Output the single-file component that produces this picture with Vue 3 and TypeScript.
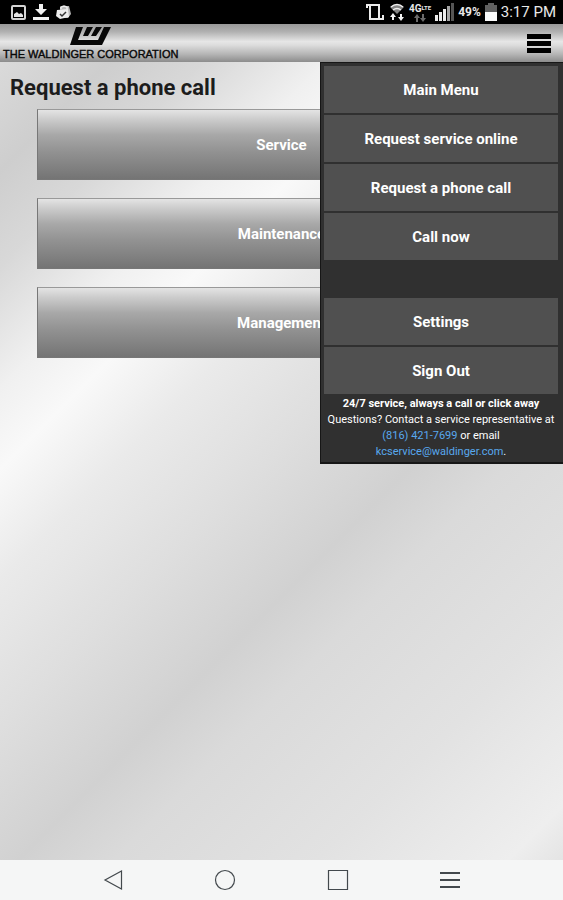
<script setup lang="ts">
import { ref } from 'vue'

const menuOpen = ref<boolean>(true)
const requests: string[] = ['Service', 'Maintenance', 'Management']
const mainLinks: string[] = ['Main Menu', 'Request service online', 'Request a phone call', 'Call now']
const accountLinks: string[] = ['Settings', 'Sign Out']
</script>

<template>
  <div class="screen">
    <div class="status">
      <div class="group notices">
        <svg width="15" height="15" viewBox="0 0 15 15">
          <rect x="1" y="1" width="13" height="13" rx="1" fill="none" stroke="#d4d4d4" stroke-width="2" />
          <path d="M3 12V9l3-2 2 2 2-1 2 2v2z" fill="#e4e4e4" />
        </svg>
        <svg width="16" height="16" viewBox="0 0 16 16" fill="#f2f2f2">
          <path d="M6 0h4v5h4l-6 6-6-6h4zM0 13h16v3H0z" />
        </svg>
        <svg width="15" height="15" viewBox="0 0 15 15">
          <path d="M4 2l9-1 2 8-3 4H4z" fill="#b8b8b8" />
          <path d="M5 4V2l3-1 3 1v2" fill="none" stroke="#ededed" stroke-width="1.5" />
          <path d="M1 5l11-1 1 8-9 2-4-3z" fill="#ededed" />
          <path d="M4 9l2 2 4-4" fill="none" stroke="#333" stroke-width="1.5" />
        </svg>
      </div>
      <div class="group">
        <svg width="19" height="18" viewBox="0 0 19 18" fill="none" stroke="#ececec" stroke-width="2">
          <path d="M1 5V2h12v14M4 2v14h13v-4" />
        </svg>
        <svg width="16" height="18" viewBox="0 0 16 18">
          <path d="M1 4q7-6 14 0L8 11z" fill="#858585" />
          <path d="M2 4q6-5 12 0M4 7q4-3 8 0" fill="none" stroke="#f0f0f0" stroke-width="1.5" />
          <path d="M4 10l3 4H5v3H3v-3H1zM12 18l3-4h-2v-3h-2v3H9z" fill="#f4f4f4" />
        </svg>
        <div class="network">
          <span class="network-name">4G<small>LTE</small></span>
          <svg width="12" height="8" viewBox="0 0 12 8" fill="#6b6b6b">
            <path d="M3 0l3 4H4v4H2V4H0zM9 8l3-4h-2V0H8v4H6z" />
          </svg>
        </div>
        <svg width="19" height="18" viewBox="0 0 19 18">
          <path d="M0 12h3v6H0zM4 9h3v9H4zM8 6h3v12H8z" fill="#ededed" />
          <path d="M12 3h3v15h-3z" fill="#a5a5a5" />
          <path d="M16 0h3v18h-3z" fill="#555" />
        </svg>
        <span class="percent">49%</span>
        <svg width="12" height="18" viewBox="0 0 12 18">
          <path d="M3 0h6v2h3v8H0V2h3z" fill="#606060" />
          <path d="M0 9h12v9H0z" fill="#fafafa" />
        </svg>
        <span class="clock">3:17 PM</span>
      </div>
    </div>

    <header class="header">
      <a class="brand" href="#">
        <svg width="41" height="18" viewBox="0 0 41 18">
          <path d="M6 0h7L8 13h20L34 0h7l-9 18H0zM17 0h6l-5 9h-5zM26 0h6l-6 9h-5z" fill="#080808" />
        </svg>
        <span class="brand-name">THE WALDINGER CORPORATION</span>
      </a>
      <button class="toggle" type="button" aria-label="Menu" @click="menuOpen = !menuOpen">
        <svg width="24" height="19" viewBox="0 0 24 19" fill="#000">
          <path d="M0 0h24v5H0zM0 7h24v5H0zM0 14h24v5H0z" />
        </svg>
      </button>
    </header>

    <main class="content">
      <h1>Request a phone call</h1>
      <div class="choices">
        <button v-for="item in requests" :key="item" class="choice" type="button">{{ item }}</button>
      </div>

      <nav v-if="menuOpen" class="menu">
        <div class="links">
          <a v-for="item in mainLinks" :key="item" class="link" href="#">{{ item }}</a>
        </div>
        <div class="links">
          <a v-for="item in accountLinks" :key="item" class="link" href="#">{{ item }}</a>
        </div>
        <p class="contact">
          <strong>24/7 service, always a call or click away</strong><br />
          Questions? Contact a service representative at <a href="tel:8164217699">(816) 421-7699</a> or email
          <a href="mailto:kcservice@waldinger.com">kcservice@waldinger.com</a>.
        </p>
      </nav>
    </main>

    <div class="keys">
      <button type="button" aria-label="Back">
        <svg width="22" height="22" viewBox="0 0 22 22"><path d="M20.5 2v18L4 11z" /></svg>
      </button>
      <button type="button" aria-label="Home">
        <svg width="22" height="22" viewBox="0 0 22 22"><circle cx="11" cy="11" r="9.5" /></svg>
      </button>
      <button type="button" aria-label="Recent apps">
        <svg width="22" height="22" viewBox="0 0 22 22"><path d="M1.5 1.5h19v19h-19z" /></svg>
      </button>
      <button type="button" aria-label="Options">
        <svg class="bars" width="22" height="22" viewBox="0 0 22 22"><path d="M0 4h20M0 11h20M0 18h20" /></svg>
      </button>
    </div>
  </div>
</template>

<style>
body {
  margin: 0;
}
</style>

<style scoped>
.screen {
  display: flex;
  flex-direction: column;
  min-height: 100vh;
  font-family: Roboto, 'Liberation Sans', sans-serif;
}

.screen * {
  box-sizing: border-box;
}

svg {
  display: block;
  flex: none;
}

.status {
  display: flex;
  align-items: center;
  justify-content: space-between;
  height: 24px;
  padding: 0 7px 0 11px;
  background: #000;
  color: #e8e8e8;
}

.group {
  display: flex;
  align-items: center;
  gap: 4px;
}

.notices {
  gap: 7px;
}

.network {
  display: flex;
  flex-direction: column;
  align-items: center;
}

.network-name {
  font-size: 10px;
  font-weight: 700;
  line-height: 10px;
}

.network-name small {
  font-size: 6px;
  vertical-align: 2px;
}

.percent {
  font-size: 12px;
  font-weight: 700;
}

.clock {
  font-size: 15px;
  white-space: nowrap;
}

.header {
  display: flex;
  align-items: center;
  justify-content: space-between;
  height: 38px;
  padding: 0 12px 0 3px;
  background: linear-gradient(#999 0%, #b0b0b0 20%, #e6e6e6 46%, #dcdcdc 56%, #b4b4b4 80%, #8c8c8c 100%);
}

.brand {
  display: flex;
  flex-direction: column;
  align-items: center;
  gap: 2px;
  padding-top: 2px;
  color: #080808;
  text-decoration: none;
}

.brand-name {
  font: 11px/14px 'Liberation Sans', Arial, sans-serif;
  -webkit-text-stroke: 0.4px #080808;
  white-space: nowrap;
}

button {
  padding: 0;
  border: 0;
  background: none;
  font-family: inherit;
  cursor: pointer;
}

.content {
  position: relative;
  flex: 1;
  padding: 12px 37px 36px;
  background: linear-gradient(
    135deg,
    #dadada 0%,
    #cecece 8%,
    #d8d8d8 15%,
    #f0f0f0 24%,
    #f9f9f9 30%,
    #eaeaea 38%,
    #dedede 49%,
    #d1d1d1 60%,
    #dadada 67%,
    #e2e2e2 82%,
    #eeeeee 96%,
    #e4e4e4 100%
  );
}

h1 {
  margin: 0 0 8px -27px;
  color: #1c1c1c;
  font-size: 22px;
  font-weight: 700;
  line-height: 27px;
}

.choices {
  display: flex;
  flex-direction: column;
  gap: 18px;
}

.choice {
  height: 71px;
  border: 1px solid #777;
  border-top-color: #999;
  background: linear-gradient(#e4e4e4 0%, #cbcbcb 14%, #a8a8a8 36%, #929292 60%, #747474 100%);
  color: #fff;
  font-size: 15px;
  font-weight: 700;
}

.menu {
  position: absolute;
  top: 0;
  right: 0;
  display: flex;
  flex-direction: column;
  width: 243px;
  padding: 3px 5px 2px 3px;
  border: solid #161616;
  border-width: 1px 0 2px 1px;
  background: #303030;
}

.links {
  display: flex;
  flex-direction: column;
  gap: 2px;
}

.links + .links {
  margin-top: 38px;
}

.link {
  display: flex;
  align-items: center;
  justify-content: center;
  height: 47px;
  background: #505050;
  color: #fff;
  font-size: 15px;
  font-weight: 700;
  text-decoration: none;
}

.contact {
  margin: 2px 0 0;
  color: #fff;
  font-size: 11px;
  line-height: 16px;
  text-align: center;
}

.contact a {
  color: #58a8ee;
  text-decoration: none;
}

.keys {
  display: flex;
  align-items: center;
  justify-content: space-between;
  height: 40px;
  padding: 0 18%;
  background: #f5f6f6;
}

.keys svg {
  fill: none;
  stroke: #43494d;
  stroke-width: 1.2;
}

.keys .bars {
  stroke-width: 2;
}
</style>
